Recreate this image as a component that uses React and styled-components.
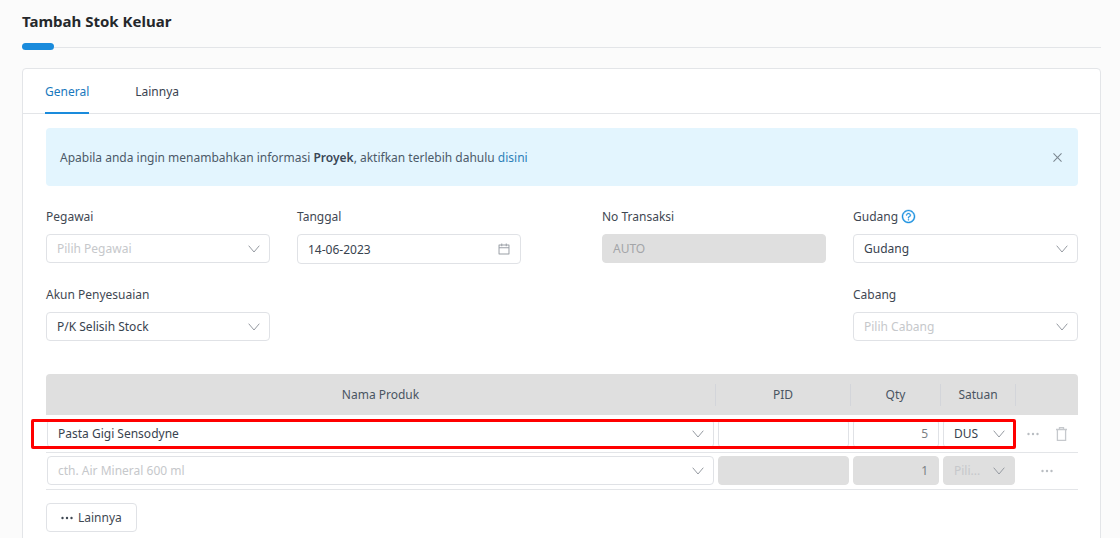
import React from "react";
import styled, { createGlobalStyle } from "styled-components";
import { AiOutlineCalendar, AiOutlineClose, AiOutlineQuestionCircle } from "react-icons/ai";

const GlobalStyle = createGlobalStyle`
	html, body {
		margin: 0;
		height: 538px;
		overflow: hidden;
		background: #fbfbfb;
	}
	body {
		font-family: "Noto Sans", "Open Sans", sans-serif;
		font-size: 12px;
		color: #2f3b4a;
	}
`;

const Page = styled.div`
	padding: 0 19px 0 22px;
	height: 538px;
	overflow: hidden;
`;

const Title = styled.h1`
	margin: 0;
	height: 43px;
	line-height: 43px;
	font-size: 15px;
	font-weight: 700;
	color: #25282b;
`;

const Divider = styled.div`
	position: relative;
	height: 7px;
	margin-bottom: 18px;
	&::before {
		content: "";
		position: absolute;
		left: 0;
		right: 0;
		top: 4px;
		height: 1px;
		background: #e3e5e8;
	}
	&::after {
		content: "";
		position: absolute;
		left: 0;
		top: 0;
		width: 32px;
		height: 7px;
		border-radius: 4px;
		background: #1a8bdc;
	}
`;

const Card = styled.div`
	background: #fff;
	border: 1px solid #e3e5e8;
	border-radius: 4px;
	min-height: 520px;
`;

const Tabs = styled.div`
	display: flex;
	gap: 46px;
	height: 44px;
	padding-left: 22px;
	border-bottom: 1px solid #e3e5e8;
`;

const Tab = styled.div`
	height: 45px;
	line-height: 45px;
	color: ${(p) => (p.$active ? "#1878bd" : "#3a4350")};
	border-bottom: ${(p) => (p.$active ? "2px solid #1a8bdc" : "none")};
	box-sizing: border-box;
`;

const Body = styled.div`
	padding: 14px 22px 0 23px;
`;

const Alert = styled.div`
	display: flex;
	align-items: center;
	justify-content: space-between;
	height: 58px;
	padding: 0 14px 0 14px;
	border-radius: 4px;
	background: #e3f5fe;
	color: #4c5a69;
	svg {
		font-size: 13px;
		color: #7b8690;
	}
	b {
		font-weight: 600;
		color: #3a4756;
	}
	a {
		color: #2d80b8;
		text-decoration: none;
	}
`;

const FormColumns = styled.div`
	display: grid;
	grid-template-columns: 475px 476px;
	justify-content: space-between;
	margin-top: 21px;
`;

const FormPair = styled.div`
	display: grid;
	grid-template-columns: 224px 1fr;
	column-gap: 27px;
	row-gap: 20px;
	align-content: start;
`;

const Field = styled.div`
	min-height: 58px;
`;

const Label = styled.label`
	display: flex;
	align-items: center;
	gap: 3px;
	height: 19px;
	margin-bottom: 8px;
	line-height: 19px;
	color: #3f4853;
	svg {
		font-size: 15px;
		color: #1f93e0;
		stroke: currentColor;
		stroke-width: 24;
	}
`;

const Control = styled.div`
	display: flex;
	align-items: center;
	justify-content: space-between;
	box-sizing: border-box;
	height: ${(p) => p.$height || 29}px;
	padding: 0 ${(p) => p.$padRight ?? 9}px 0 ${(p) => p.$padLeft ?? 10}px;
	border: 1px solid ${(p) => (p.$disabled ? "#dfdfdf" : "#e0e2e6")};
	border-radius: 4px;
	background: ${(p) => (p.$disabled ? "#dfdfdf" : "#fff")};
	color: ${(p) => (p.$muted ? "#c6c8cb" : "#39434f")};
	white-space: nowrap;
	overflow: hidden;
	svg {
		flex: none;
	}
`;

const Faded = styled.span`
	color: ${(p) => p.$color};
`;

const CalendarIcon = styled(AiOutlineCalendar)`
	font-size: 14px;
	color: #9a9fa6;
`;

const Table = styled.div`
	margin-top: 31px;
`;

const HeadRow = styled.div`
	display: grid;
	grid-template-columns: 670px 135px 90px 75px 62px;
	height: 41px;
	align-items: center;
	background: #dfdfdf;
	border-radius: 4px 4px 0 0;
	color: #4a5562;
`;

const HeadCell = styled.div`
	display: flex;
	align-items: center;
	justify-content: center;
	height: 22px;
	border-right: ${(p) => (p.$plain ? "none" : "1px solid #d3d5da")};
`;

const Row = styled.div`
	position: relative;
	display: grid;
	grid-template-columns: 670px 135px 90px 75px 62px;
	height: ${(p) => p.$height || 37}px;
	padding-top: ${(p) => p.$top || 3}px;
	align-items: start;
	box-sizing: border-box;
	border-bottom: 1px solid #e3e5e8;
`;

const Cell = styled.div`
	padding: 0 ${(p) => p.$right ?? 2}px 0 ${(p) => p.$left ?? 2}px;
`;

const Count = styled.span`
	margin-left: auto;
	color: #7b7f85;
`;

const Actions = styled.div`
	display: flex;
	align-items: center;
	justify-content: ${(p) => (p.$center ? "center" : "flex-start")};
	gap: 17px;
	height: 29px;
	padding-left: ${(p) => (p.$center ? 0 : 11)}px;
	color: #b9bdc2;
	svg {
		display: block;
	}
`;

const Highlight = styled.div`
	position: absolute;
	left: -15px;
	top: 4px;
	width: 985px;
	height: 30px;
	box-sizing: border-box;
	border: 3px solid #f00;
	border-radius: 2px;
	pointer-events: none;
`;

const MoreButton = styled.button`
	display: flex;
	align-items: center;
	gap: 5px;
	height: 29px;
	width: 91px;
	margin-top: 13px;
	padding: 0 0 0 14px;
	border: 1px solid #e0e2e6;
	border-radius: 4px;
	background: #fff;
	color: #3f4853;
	font: inherit;
`;

const Chevron = () => (
	<svg width="12" height="8" viewBox="0 0 12 8" fill="none" stroke="#959aa1">
		<path d="M.7.7 6 7l5.3-6.3" />
	</svg>
);

const Dots = ({ color = "currentColor" }) => (
	<svg width="12" height="4" viewBox="0 0 12 4" fill={color}>
		<circle cx="1.5" cy="2" r="1.2" />
		<circle cx="6" cy="2" r="1.2" />
		<circle cx="10.5" cy="2" r="1.2" />
	</svg>
);

const Trash = () => (
	<svg width="11" height="14" viewBox="0 0 11 14" fill="none" stroke="#c6c9cd" strokeWidth="1.3">
		<path d="M0 2.5h11M3.5 2.5V.6h4v1.9M1.4 2.5v10.9h8.2V2.5" />
	</svg>
);

const Select = ({ children, muted, ...rest }) => (
	<Control $muted={muted} {...rest}>
		{children}
		<Chevron />
	</Control>
);

const App = () => (
	<Page>
		<GlobalStyle />
		<Title>Tambah Stok Keluar</Title>
		<Divider />
		<Card>
			<Tabs>
				<Tab $active>General</Tab>
				<Tab>Lainnya</Tab>
			</Tabs>
			<Body>
				<Alert>
					<span>
						Apabila anda ingin menambahkan informasi <b>Proyek</b>, aktifkan terlebih dahulu <a href="#disini">disini</a>
					</span>
					<AiOutlineClose />
				</Alert>
				<FormColumns>
					<FormPair>
						<Field>
							<Label>Pegawai</Label>
							<Select muted>Pilih Pegawai</Select>
						</Field>
						<Field>
							<Label>Tanggal</Label>
							<Control $height={30}>
								14-06-2023
								<CalendarIcon />
							</Control>
						</Field>
						<Field>
							<Label>Akun Penyesuaian</Label>
							<Select>P/K Selisih Stock</Select>
						</Field>
					</FormPair>
					<FormPair>
						<Field>
							<Label>No Transaksi</Label>
							<Control $disabled>
								<Faded $color="#a3a5a8">AUTO</Faded>
							</Control>
						</Field>
						<Field>
							<Label>
								Gudang <AiOutlineQuestionCircle />
							</Label>
							<Select>Gudang</Select>
						</Field>
						<Field />
						<Field>
							<Label>Cabang</Label>
							<Select muted>Pilih Cabang</Select>
						</Field>
					</FormPair>
				</FormColumns>
				<Table>
					<HeadRow>
						<HeadCell>Nama Produk</HeadCell>
						<HeadCell>PID</HeadCell>
						<HeadCell>Qty</HeadCell>
						<HeadCell>Satuan</HeadCell>
						<HeadCell $plain />
					</HeadRow>
					<Row $height={38} $top={4}>
						<Cell $left={1}>
							<Select>Pasta Gigi Sensodyne</Select>
						</Cell>
						<Cell>
							<Control />
						</Cell>
						<Cell>
							<Control $padRight={10}>
								<Count>5</Count>
							</Control>
						</Cell>
						<Cell $right={1}>
							<Select>DUS</Select>
						</Cell>
						<Actions>
							<Dots />
							<Trash />
						</Actions>
						<Highlight />
					</Row>
					<Row>
						<Cell $left={1}>
							<Select muted>cth. Air Mineral 600 ml</Select>
						</Cell>
						<Cell>
							<Control $disabled />
						</Cell>
						<Cell>
							<Control $disabled $padRight={10}>
								<Count>1</Count>
							</Control>
						</Cell>
						<Cell $right={1}>
							<Select $disabled muted>Pili...</Select>
						</Cell>
						<Actions $center>
							<Dots />
						</Actions>
					</Row>
					<MoreButton>
						<Dots color="#3f4853" />
						Lainnya
					</MoreButton>
				</Table>
			</Body>
		</Card>
	</Page>
);

export default App;
